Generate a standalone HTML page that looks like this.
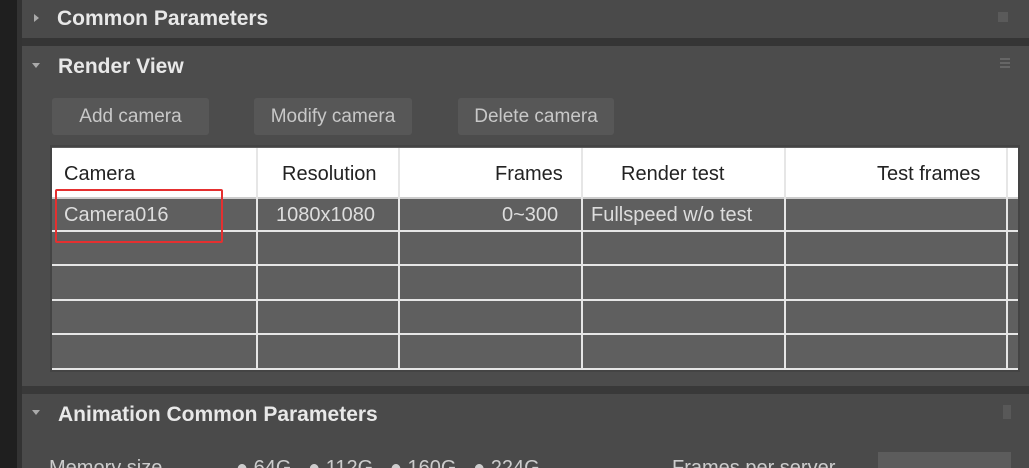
<!DOCTYPE html>
<html style="width:1029px;height:468px;overflow:hidden"><head><style>
*{margin:0;padding:0;box-sizing:border-box}
html,body{width:1029px;height:468px;overflow:hidden}
body{background:#3c3c3c;font-family:"Liberation Sans",sans-serif;position:relative;color:#ddd}
.a{position:absolute}
.hd{font-weight:bold;font-size:21px;color:#e8e8e8}
.btn{position:absolute;top:98px;height:37px;background:#575757;border-radius:3px;color:#c8c8c8;font-size:19px;line-height:37px;text-align:center}
.t{position:absolute;font-size:20px;white-space:nowrap}
.hl{position:absolute;left:52px;width:966px;height:2px;background:#e6e6e6}
.vl{position:absolute;top:148px;width:2px;height:222px;background:#e6e6e6}
.tri{position:absolute;width:0;height:0}
</style></head><body>
<div class="a" style="left:0;top:0;width:17px;height:468px;background:#1f1f1f"></div>
<div class="a" style="left:17px;top:0;width:5px;height:468px;background:#333"></div>
<div class="a" style="left:22px;top:0;width:1007px;height:38px;background:#4a4a4a"></div>
<div class="a" style="left:22px;top:38px;width:1007px;height:8px;background:#353535"></div>
<div class="a" style="left:22px;top:46px;width:1007px;height:340px;background:#4c4c4c"></div>
<div class="a" style="left:22px;top:386px;width:1007px;height:8px;background:#393939"></div>
<div class="a" style="left:22px;top:394px;width:1007px;height:74px;background:#4a4a4a"></div>
<div class="tri" style="left:34px;top:14px;border-left:5px solid #aaa;border-top:4px solid transparent;border-bottom:4px solid transparent"></div>
<div class="a hd" style="left:57px;top:7px">Common Parameters</div>
<div class="a" style="left:998px;top:12px;width:10px;height:10px;background:#5a5a5a"></div>
<div class="tri" style="left:32px;top:63px;border-top:5px solid #aaa;border-left:4px solid transparent;border-right:4px solid transparent"></div>
<div class="a hd" style="left:58px;top:55px">Render View</div>
<div class="a" style="left:1000px;top:58px;width:10px;height:2px;background:#666;box-shadow:0 4px #666,0 8px #666"></div>
<div class="btn" style="left:52px;width:157px">Add camera</div>
<div class="btn" style="left:254px;width:158px">Modify camera</div>
<div class="btn" style="left:458px;width:156px">Delete camera</div>
<div class="a" style="left:50px;top:145px;width:970px;height:227px;background:#5f5f5f;border:2px solid #444"></div>
<div class="a" style="left:52px;top:148px;width:966px;height:49px;background:#fff"></div>
<div class="hl" style="top:197px;background:#ccc"></div>
<div class="hl" style="top:230px"></div>
<div class="hl" style="top:264px"></div>
<div class="hl" style="top:299px"></div>
<div class="hl" style="top:333px"></div>
<div class="hl" style="top:368px"></div>
<div class="vl" style="left:256px"></div>
<div class="vl" style="left:398px"></div>
<div class="vl" style="left:581px"></div>
<div class="vl" style="left:784px"></div>
<div class="vl" style="left:1006px"></div>
<div class="t" style="left:64px;top:163px;color:#222">Camera</div>
<div class="t" style="left:282px;top:163px;color:#222">Resolution</div>
<div class="t" style="left:495px;top:163px;color:#222">Frames</div>
<div class="t" style="left:621px;top:163px;color:#222">Render test</div>
<div class="t" style="left:877px;top:163px;color:#222">Test frames</div>
<div class="t" style="left:64px;top:204px;color:#ddd">Camera016</div>
<div class="t" style="left:276px;top:204px;color:#ddd">1080x1080</div>
<div class="t" style="left:502px;top:204px;color:#ddd">0~300</div>
<div class="t" style="left:591px;top:204px;color:#ddd">Fullspeed w/o test</div>
<div class="a" style="left:55px;top:189px;width:168px;height:54px;border:2px solid #e53030;border-radius:2px"></div>
<div class="tri" style="left:32px;top:410px;border-top:5px solid #aaa;border-left:4px solid transparent;border-right:4px solid transparent"></div>
<div class="a hd" style="left:58px;top:403px">Animation Common Parameters</div>
<div class="a" style="left:1003px;top:405px;width:8px;height:14px;background:#585858"></div>
<div class="t" style="left:49px;top:457px;color:#ccc">Memory size</div>
<div class="t" style="left:236px;top:457px;color:#ccc">● 64G &nbsp; ● 112G &nbsp; ● 160G &nbsp; ● 224G</div>
<div class="t" style="left:672px;top:457px;color:#ccc">Frames per server</div>
<div class="a" style="left:878px;top:452px;width:133px;height:16px;background:#5c5c5c"></div>
</body></html>
